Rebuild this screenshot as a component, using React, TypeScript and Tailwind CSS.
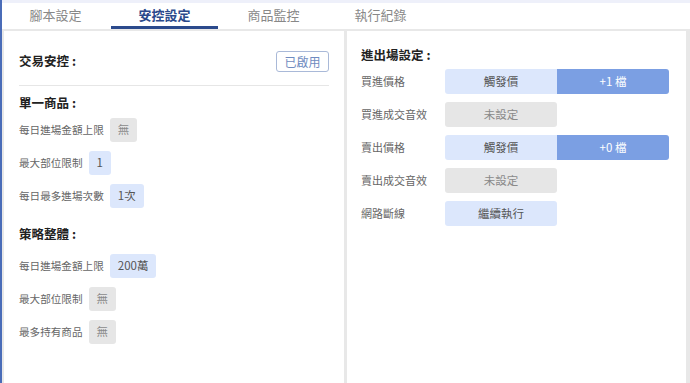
import React from 'react';

const FONT = { fontFamily: '"Noto Sans CJK TC", "Noto Sans", sans-serif' };

const tabs = ['腳本設定', '安控設定', '商品監控', '執行紀錄'];

type Tone = 'gray' | 'blue';

const Title: React.FC<{ text: string; className?: string }> = ({ text, className = '' }) => (
  <div className={'h-[20px] flex items-center text-[12.5px] font-bold text-[#222] ' + className}>
    {text}
    <span className="ml-[3px]">:</span>
  </div>
);

const Badge: React.FC<{ tone: Tone; children: React.ReactNode }> = ({ tone, children }) => (
  <span
    className={
      'inline-flex items-center justify-center h-[24px] px-[8px] rounded-[3px] text-[11.5px] ' +
      (tone === 'gray' ? 'bg-[#e6e6e6] text-[#8a8a8a]' : 'bg-[#dce7fc] text-[#555]')
    }
  >
    {children}
  </span>
);

const LimitRow: React.FC<{ label: string; value: string; tone: Tone }> = ({ label, value, tone }) => (
  <div className="flex items-center gap-[6px] h-[24px]">
    <span className="text-[10.6px] text-[#666]">{label}</span>
    <Badge tone={tone}>{value}</Badge>
  </div>
);

const SettingRow: React.FC<{ label: string; children: React.ReactNode }> = ({ label, children }) => (
  <div className="flex items-center h-[25px]">
    <span className="w-[84px] text-[11px] text-[#666]">{label}</span>
    {children}
  </div>
);

const Split: React.FC<{ step: string }> = ({ step }) => (
  <div className="flex h-[25px]">
    <div className="w-[112px] flex items-center justify-center rounded-l-[3px] bg-[#dce7fc] text-[11.5px] text-[#555]">觸發價</div>
    <div className="w-[112px] flex items-center justify-center rounded-r-[3px] bg-[#7b9fe3] text-[11.5px] text-white">{step}</div>
  </div>
);

const Single: React.FC<{ tone: Tone; children: React.ReactNode }> = ({ tone, children }) => (
  <div
    className={
      'w-[112px] h-[25px] flex items-center justify-center rounded-[3px] text-[11.5px] ' +
      (tone === 'gray' ? 'bg-[#e6e6e6] text-[#8a8a8a]' : 'bg-[#dce7fc] text-[#555]')
    }
  >
    {children}
  </div>
);

const App: React.FC = () => {
  return (
    <div className="w-[690px] h-[383px] flex overflow-hidden bg-white" style={FONT}>
      <div className="w-[2px] bg-[#4a6cb8]" />
      <div className="flex-1 flex flex-col">
        <div className="h-[3px] bg-[#eef0fa]" />
        <div className="h-[26px] flex bg-white">
          {tabs.map((t, i) => (
            <div
              key={t}
              className={
                'w-[107px] flex items-center justify-center text-[13px] border-b-[3px] ' +
                (i === 1 ? 'font-bold text-[#2b4a8c] border-[#2b4a8c] mx-[2px]' : 'text-[#888] border-transparent')
              }
            >
              {t}
            </div>
          ))}
        </div>

        <div className="flex-1 flex gap-[3px] bg-[#e8e8e8] pt-[2px] pl-[2px] pr-[4px]">
          {/* 安控 */}
          <div className="w-[340px] bg-white px-[15px] pt-[20px]">
            <div className="flex items-center justify-between h-[21px]">
              <Title text="交易安控" />
              <span className="h-[21px] w-[53px] flex items-center justify-center rounded-[3px] border border-[#a9b9d8] text-[12px] text-[#6f8bc0]">
                已啟用
              </span>
            </div>
            <div className="mt-[13px] border-t border-[#e6e6e6]" />

            <Title text="單一商品" className="mt-[7px]" />
            <div className="mt-[5px] flex flex-col gap-[9px]">
              <LimitRow label="每日進場金額上限" value="無" tone="gray" />
              <LimitRow label="最大部位限制" value="1" tone="blue" />
              <LimitRow label="每日最多進場次數" value="1次" tone="blue" />
            </div>

            <Title text="策略整體" className="mt-[16px]" />
            <div className="mt-[10px] flex flex-col gap-[9px]">
              <LimitRow label="每日進場金額上限" value="200萬" tone="blue" />
              <LimitRow label="最大部位限制" value="無" tone="gray" />
              <LimitRow label="最多持有商品" value="無" tone="gray" />
            </div>
          </div>

          {/* 進出場 */}
          <div className="flex-1 bg-white px-[14px] pt-[14px]">
            <Title text="進出場設定" />
            <div className="mt-[4px] flex flex-col gap-[8px]">
              <SettingRow label="買進價格">
                <Split step="+1 檔" />
              </SettingRow>
              <SettingRow label="買進成交音效">
                <Single tone="gray">未設定</Single>
              </SettingRow>
              <SettingRow label="賣出價格">
                <Split step="+0 檔" />
              </SettingRow>
              <SettingRow label="賣出成交音效">
                <Single tone="gray">未設定</Single>
              </SettingRow>
              <SettingRow label="網路斷線">
                <Single tone="blue">繼續執行</Single>
              </SettingRow>
            </div>
          </div>
        </div>
      </div>
    </div>
  );
};

export default App;
